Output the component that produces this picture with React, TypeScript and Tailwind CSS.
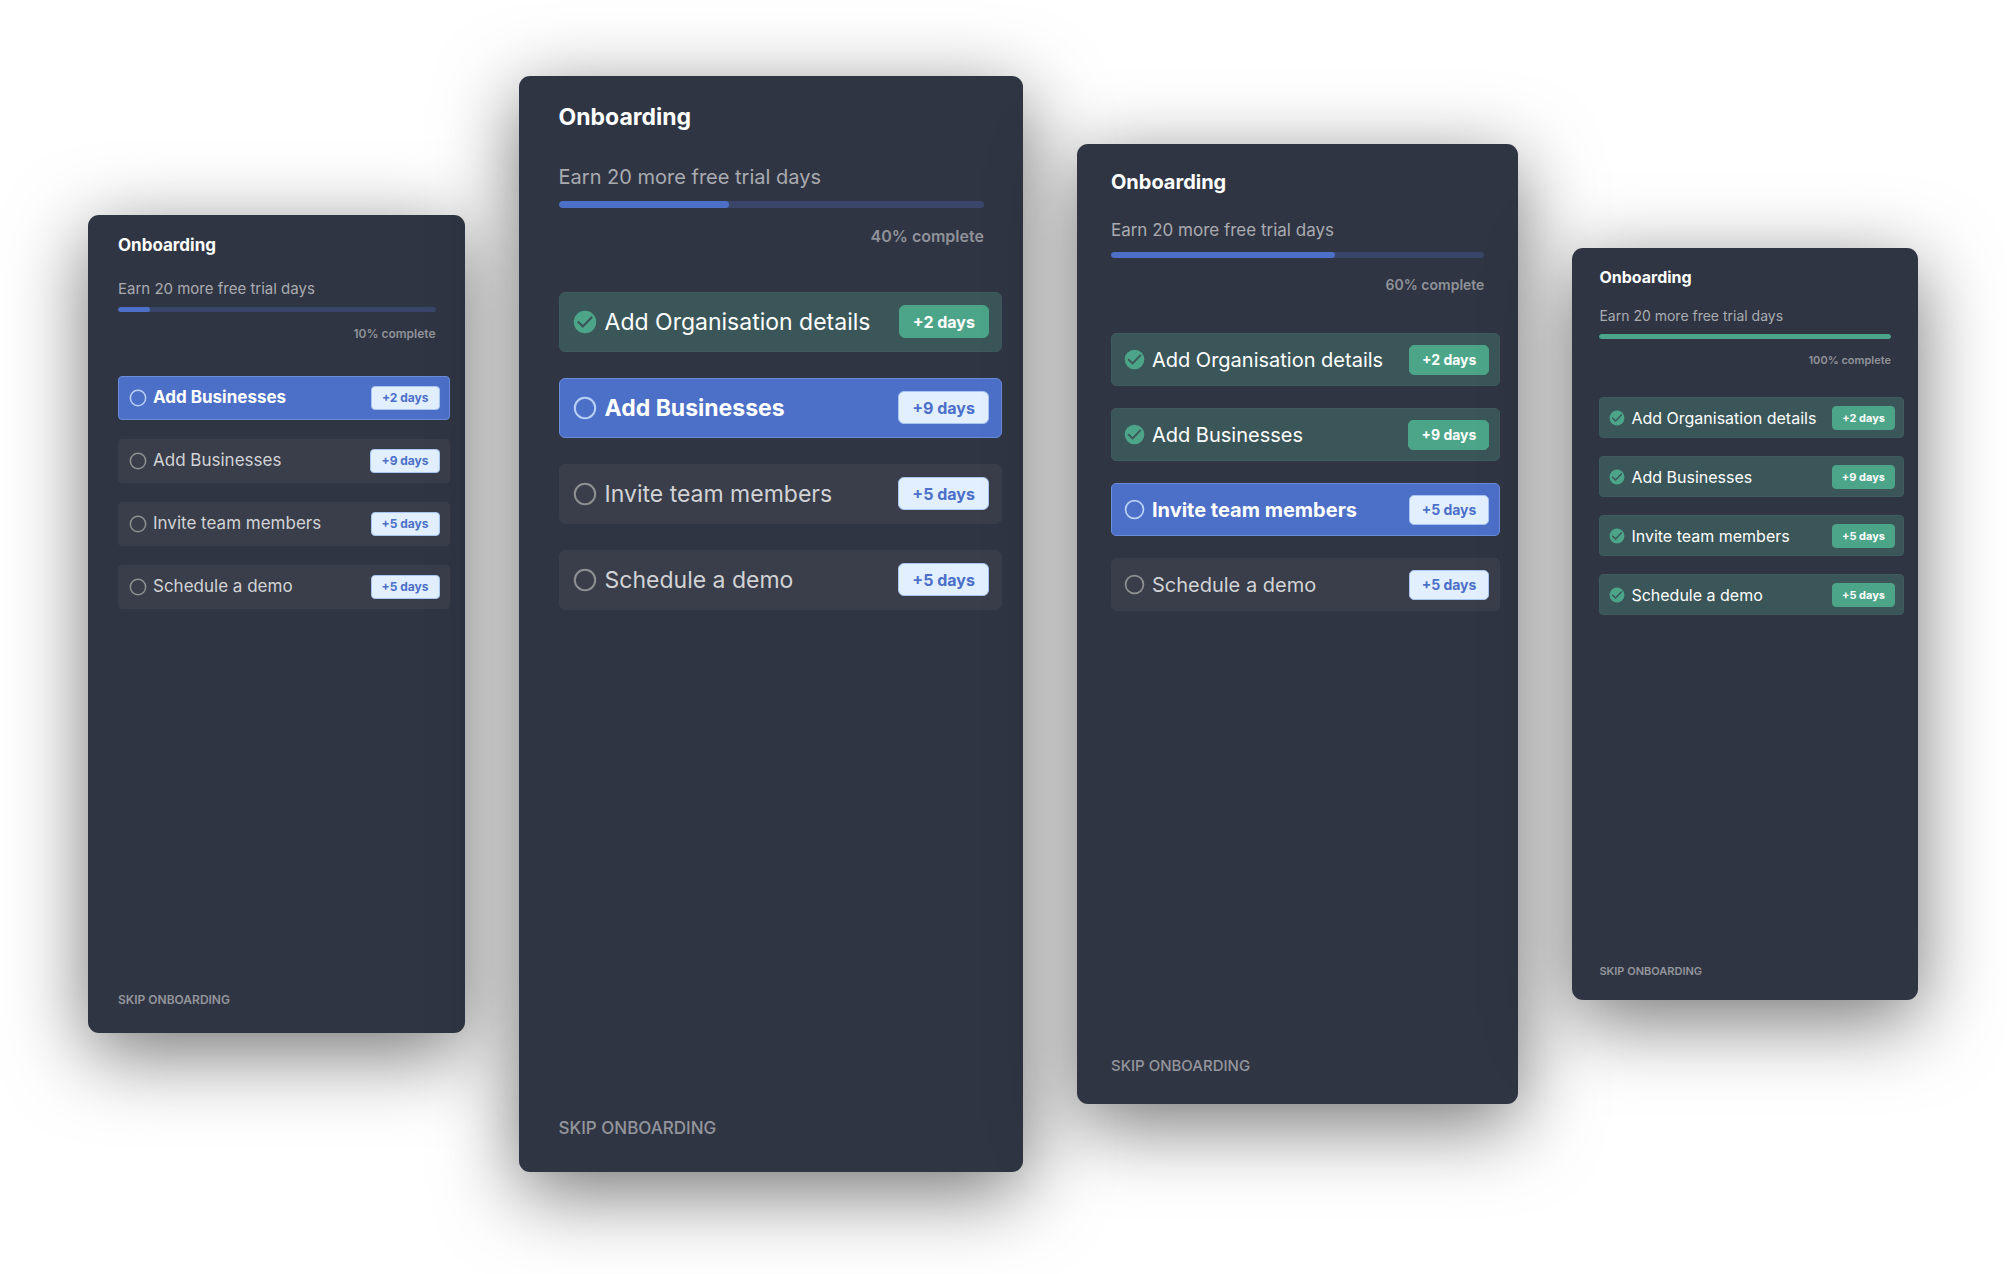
import clsx from 'clsx'

type TaskState = 'done' | 'current' | 'todo'
type Size = 'xs' | 'sm' | 'md' | 'lg'

interface Task {
  label: string
  days: number
  state: TaskState
}

interface Onboarding {
  size: Size
  progress: number
  tasks: Task[]
}

const panels: Onboarding[] = [
  {
    size: 'sm',
    progress: 10,
    tasks: [
      { label: 'Add Businesses', days: 2, state: 'current' },
      { label: 'Add Businesses', days: 9, state: 'todo' },
      { label: 'Invite team members', days: 5, state: 'todo' },
      { label: 'Schedule a demo', days: 5, state: 'todo' },
    ],
  },
  {
    size: 'lg',
    progress: 40,
    tasks: [
      { label: 'Add Organisation details', days: 2, state: 'done' },
      { label: 'Add Businesses', days: 9, state: 'current' },
      { label: 'Invite team members', days: 5, state: 'todo' },
      { label: 'Schedule a demo', days: 5, state: 'todo' },
    ],
  },
  {
    size: 'md',
    progress: 60,
    tasks: [
      { label: 'Add Organisation details', days: 2, state: 'done' },
      { label: 'Add Businesses', days: 9, state: 'done' },
      { label: 'Invite team members', days: 5, state: 'current' },
      { label: 'Schedule a demo', days: 5, state: 'todo' },
    ],
  },
  {
    size: 'xs',
    progress: 100,
    tasks: [
      { label: 'Add Organisation details', days: 2, state: 'done' },
      { label: 'Add Businesses', days: 9, state: 'done' },
      { label: 'Invite team members', days: 5, state: 'done' },
      { label: 'Schedule a demo', days: 5, state: 'done' },
    ],
  },
]

const sizes = {
  lg: {
    panel: 'pt-[27px] pb-[34px] pl-10 pr-[21px]',
    head: 'pr-[18px]',
    title: 'text-[23px] leading-[28px]',
    lead: 'mt-[34px] text-[20px] leading-[24px]',
    bar: 'mt-3 h-[7px]',
    percent: 'mt-[18px] text-[16px] leading-[20px]',
    list: 'mt-[46px] gap-[26px]',
    task: 'h-[60px] pl-[13px] pr-3 rounded-md text-[23px]',
    icon: 'size-[24px] mr-2',
    badge: 'h-[33px] px-[13px] rounded-md text-[16px]',
    skip: 'text-[17px] leading-[20px] font-medium',
  },
  md: {
    panel: 'pt-[26px] pb-[29px] pl-[34px] pr-[18px]',
    head: 'pr-4',
    title: 'text-[20px] leading-[24px]',
    lead: 'mt-[25px] text-[17px] leading-[22px]',
    bar: 'mt-[11px] h-[6px]',
    percent: 'mt-[18px] text-[14px] leading-[18px]',
    list: 'mt-[39px] gap-[22px]',
    task: 'h-[53px] pl-3 pr-[10px] rounded-[5px] text-[20px]',
    icon: 'size-[21px] mr-[7px]',
    badge: 'h-[30px] px-3 rounded-[5px] text-[14px]',
    skip: 'text-[15px] leading-[18px] font-medium',
  },
  sm: {
    panel: 'pt-[19px] pb-[25px] pl-[30px] pr-[15px]',
    head: 'pr-[14px]',
    title: 'text-[17px] leading-[22px]',
    lead: 'mt-[23px] text-[15px] leading-[20px]',
    bar: 'mt-2 h-[5px]',
    percent: 'mt-[14px] text-[12px] leading-[16px]',
    list: 'mt-[34px] gap-[19px]',
    task: 'h-[44px] pl-[10px] pr-[9px] rounded text-[17px]',
    icon: 'size-[18px] mr-[6px]',
    badge: 'h-[24px] px-[10px] rounded text-[12px]',
    skip: 'text-[12px] leading-[16px] font-semibold',
  },
  xs: {
    panel: 'pt-[19px] pb-[21px] pl-[27px] pr-[14px]',
    head: 'pr-[13px]',
    title: 'text-[16px] leading-[20px]',
    lead: 'mt-5 text-[14px] leading-[18px]',
    bar: 'mt-[9px] h-[5px]',
    percent: 'mt-[13px] text-[11px] leading-[16px]',
    list: 'mt-[29px] gap-[18px]',
    task: 'h-[41px] pl-[9px] pr-2 rounded text-[16px]',
    icon: 'size-[16px] mr-[6px]',
    badge: 'h-[24px] px-[9px] rounded text-[11px]',
    skip: 'text-[11px] leading-[16px] font-semibold',
  },
}

function TaskIcon({ state, className }: { state: TaskState; className: string }) {
  if (state === 'done') {
    return (
      <svg viewBox="0 0 24 24" className={clsx('shrink-0', className)} aria-hidden="true">
        <circle cx="12" cy="12" r="11.2" fill="#4ca588" />
        <path d="M4.8 11.6 9.8 16.4 19.2 6.8" fill="none" stroke="#3b5659" strokeWidth="2.2" />
      </svg>
    )
  }
  return (
    <svg viewBox="0 0 24 24" className={clsx('shrink-0', className)} aria-hidden="true">
      <circle cx="12" cy="12" r="10.2" fill="none" stroke={state === 'current' ? '#b9d1f8' : '#8f9092'} strokeWidth="2" />
    </svg>
  )
}

function TaskRow({ task, size }: { task: Task; size: Size }) {
  const s = sizes[size]
  return (
    <li>
      <button
        className={clsx(
          'flex w-full items-center border text-left',
          s.task,
          task.state === 'done' && 'bg-[#3b5659] border-[#3e5b5d] text-white',
          task.state === 'current' && 'bg-[#4c6fc8] border-[#6a8cdb] text-white font-bold',
          task.state === 'todo' && 'bg-[#393e4a] border-[#3a3f4b] text-[#d2d3d6]',
        )}
      >
        <TaskIcon state={task.state} className={s.icon} />
        <span className="flex-1 whitespace-nowrap">{task.label}</span>
        <span
          className={clsx(
            'flex items-center border whitespace-nowrap font-bold',
            s.badge,
            task.state === 'done'
              ? 'bg-[#4ca588] border-[#4ca588] text-white'
              : 'bg-[#e2effe] border-[#a9c5f3] text-[#4c6fc8]',
          )}
        >
          +{task.days} days
        </span>
      </button>
    </li>
  )
}

function OnboardingPanel({ size, progress, tasks }: Onboarding) {
  const s = sizes[size]
  const complete = progress === 100
  return (
    <section
      className={clsx(
        'flex flex-col min-w-0 aspect-[23/50] rounded-[11px] bg-[#303543] shadow-[0_20px_80px_rgba(0,0,0,0.55)]',
        s.panel,
      )}
    >
      <div className={s.head}>
        <h2 className={clsx('font-bold text-white', s.title)}>Onboarding</h2>
        <p className={clsx('text-[#a9abb1]', s.lead)}>Earn 20 more free trial days</p>
        <div
          role="progressbar"
          aria-label="Onboarding progress"
          aria-valuenow={progress}
          className={clsx('overflow-hidden rounded-full bg-[#39466a]', s.bar)}
        >
          <div
            className={clsx('h-full rounded-full', complete ? 'bg-[#4ca588]' : 'bg-[#4c6fc8]')}
            style={{ width: `${progress}%` }}
          />
        </div>
        <p className={clsx('text-right font-semibold text-[#8f9299]', s.percent)}>{progress}% complete</p>
      </div>

      <ul className={clsx('flex flex-col', s.list)}>
        {tasks.map((task, i) => (
          <TaskRow key={i} task={task} size={size} />
        ))}
      </ul>

      <button className={clsx('mt-auto self-start text-[#94969d]', s.skip)}>SKIP ONBOARDING</button>
    </section>
  )
}

export default function App() {
  return (
    <main className="grid min-h-screen grid-cols-[377fr_505fr_442fr_346fr] items-center gap-[54px] overflow-hidden bg-white pl-[88px] pr-[89px] pb-[26px] font-['Inter',sans-serif]">
      {panels.map((panel) => (
        <OnboardingPanel key={panel.size} {...panel} />
      ))}
    </main>
  )
}
